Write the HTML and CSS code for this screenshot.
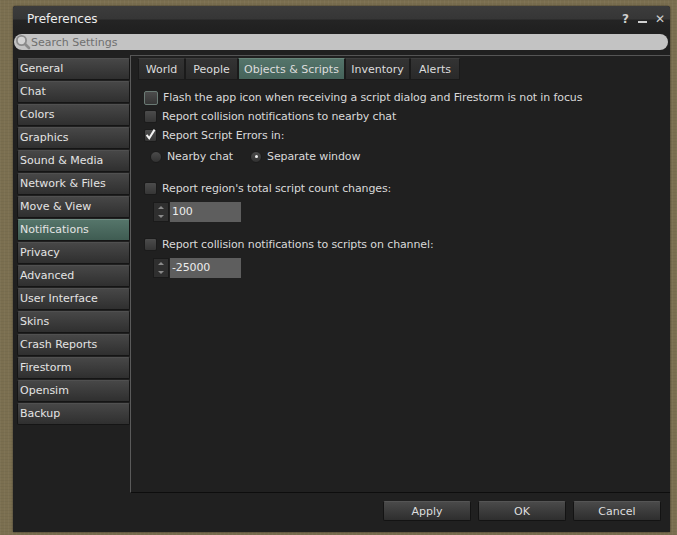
FILE: index.html
```html
<!DOCTYPE html>
<html lang="en">
<head>
<meta charset="utf-8">
<title>Preferences</title>
<link rel="stylesheet" href="styles.css">
</head>
<body>
<div class="window">
  <div class="titlebar">
    <span class="title">Preferences</span>
    <div class="controls">
      <span>?</span>
      <span class="minimize"></span>
      <span>&#x2715;</span>
    </div>
  </div>

  <div class="search">
    <svg class="search-icon" width="16" height="16" viewBox="0 0 16 16">
      <circle cx="6.5" cy="6.5" r="4.6" fill="#d4d4d4" stroke="#8c8c8c" stroke-width="1.8"/>
      <line x1="10" y1="10" x2="14" y2="14" stroke="#8c8c8c" stroke-width="2.6" stroke-linecap="round"/>
    </svg>
    <span class="placeholder">Search Settings</span>
  </div>

  <div class="content">
    <nav class="sidebar">
      <div class="side-btn">General</div>
      <div class="side-btn">Chat</div>
      <div class="side-btn">Colors</div>
      <div class="side-btn">Graphics</div>
      <div class="side-btn">Sound &amp; Media</div>
      <div class="side-btn">Network &amp; Files</div>
      <div class="side-btn">Move &amp; View</div>
      <div class="side-btn active">Notifications</div>
      <div class="side-btn">Privacy</div>
      <div class="side-btn">Advanced</div>
      <div class="side-btn">User Interface</div>
      <div class="side-btn">Skins</div>
      <div class="side-btn">Crash Reports</div>
      <div class="side-btn">Firestorm</div>
      <div class="side-btn">Opensim</div>
      <div class="side-btn">Backup</div>
    </nav>

    <div class="panel">
      <div class="tabs">
        <div class="tab tab-world">World</div>
        <div class="tab tab-people">People</div>
        <div class="tab tab-objects active">Objects &amp; Scripts</div>
        <div class="tab tab-inventory">Inventory</div>
        <div class="tab tab-alerts">Alerts</div>
      </div>

      <div class="options">
        <label class="row">
          <span class="check focused"></span>
          Flash the app icon when receiving a script dialog and Firestorm is not in focus
        </label>
        <label class="row">
          <span class="check"></span>
          Report collision notifications to nearby chat
        </label>
        <label class="row">
          <span class="check checked">
            <svg width="13" height="13" viewBox="0 0 13 13"><path d="M2.6 6.8 L5.2 10.2 L10.6 1.6" fill="none" stroke="#f2f2f2" stroke-width="2"/></svg>
          </span>
          Report Script Errors in:
        </label>
        <div class="row radios">
          <span class="radio-item"><span class="radio"></span>Nearby chat</span>
          <span class="radio-item"><span class="radio selected"></span>Separate window</span>
        </div>

        <label class="row group">
          <span class="check"></span>
          Report region's total script count changes:
        </label>
        <div class="spinner">
          <div class="arrows">
            <span class="arrow up"></span>
            <span class="arrow down"></span>
          </div>
          <div class="value">100</div>
        </div>

        <label class="row group">
          <span class="check"></span>
          Report collision notifications to scripts on channel:
        </label>
        <div class="spinner">
          <div class="arrows">
            <span class="arrow up"></span>
            <span class="arrow down"></span>
          </div>
          <div class="value">-25000</div>
        </div>
      </div>
    </div>
  </div>

  <div class="footer">
    <button class="btn">Apply</button>
    <button class="btn">OK</button>
    <button class="btn">Cancel</button>
  </div>
</div>
</body>
</html>
```

FILE: styles.css
```css
* {
  box-sizing: border-box;
}
body {
  margin: 0;
  width: 677px;
  height: 535px;
  overflow: hidden;
  font-family: "DejaVu Sans", "Liberation Sans", sans-serif;
  font-size: 11px;
  color: #dadada;
  background-color: #7b6f50;
  background-image:
    repeating-linear-gradient(90deg, rgba(255,255,255,0.03) 0 1px, transparent 1px 4px),
    repeating-linear-gradient(0deg, rgba(0,0,0,0.04) 0 1px, transparent 1px 3px);
}
.window {
  margin: 6px 0 0 13px;
  width: 657px;
  height: 526px;
  background: #202020;
  display: flex;
  flex-direction: column;
  border-radius: 3px 3px 0 0;
  box-shadow: 0 0 2px rgba(0,0,0,0.7);
}

/* title bar */
.titlebar {
  height: 26px;
  display: flex;
  align-items: center;
  padding: 0 6px 0 14px;
  border-radius: 3px 3px 0 0;
  background: linear-gradient(#3c3c3c 0%, #363636 50%, #242424 54%, #202020 100%);
}
.title {
  flex: 1;
  font-size: 12px;
  color: #ededed;
}
.controls {
  display: flex;
  align-items: center;
  gap: 8px;
  color: #d0d0d0;
  font-weight: bold;
  font-size: 12px;
}
.controls span {
  width: 9px;
  text-align: center;
}
.controls .minimize {
  height: 2px;
  margin-top: 6px;
  background: #d0d0d0;
}

/* search */
.search {
  margin: 2px 2px 0 1px;
  height: 16px;
  border-radius: 8px;
  background: #c3c3c3;
  display: flex;
  align-items: center;
  position: relative;
}
.search-icon {
  position: absolute;
  left: 1px;
  top: 0;
}
.placeholder {
  padding-left: 17px;
  color: #6f6f6f;
}

/* main area */
.content {
  flex: 1;
  display: flex;
  margin-top: 5px;
}
.sidebar {
  width: 117px;
  padding: 3px 0 0 4px;
  display: flex;
  flex-direction: column;
  gap: 1px;
}
.side-btn {
  height: 22px;
  line-height: 20px;
  padding-left: 2px;
  color: #e4e4e4;
  background: linear-gradient(#474747, #2f2f2f);
  border: 1px solid #151515;
  border-top-color: #505050;
  border-radius: 2px;
}
.side-btn.active {
  background: linear-gradient(#55756a, #3f5c52);
  border-top-color: #6f8c82;
}
.panel {
  flex: 1;
  border-top: 1px solid #555;
  border-left: 1px solid #5a5a5a;
  border-bottom: 1px solid #0d0d0d;
}
.tabs {
  display: flex;
  margin: 2px 0 0 7px;
}
.tab {
  height: 22px;
  line-height: 21px;
  text-align: center;
  color: #dcdcdc;
  background: linear-gradient(#333, #292929);
  border: 1px solid #1a1a1a;
  border-top-color: #3d3d3d;
}
.tab.active {
  background: linear-gradient(#54746a, #45635a);
  border-top-color: #688579;
}
.tab-world { width: 47px; }
.tab-people { width: 53px; }
.tab-objects { width: 107px; }
.tab-inventory { width: 65px; }
.tab-alerts { width: 50px; }

/* options */
.options {
  padding: 8px 0 0 13px;
  letter-spacing: -0.12px;
}
.row {
  height: 19px;
  display: flex;
  align-items: center;
  gap: 5px;
  color: #d9d9d9;
}
.check {
  width: 13px;
  height: 13px;
  flex-shrink: 0;
  border-radius: 2px;
  background: linear-gradient(#4c4c4c, #363636);
  border: 1px solid #1b1b1b;
  position: relative;
}
.check.focused {
  width: 14px;
  height: 14px;
  border-color: #6a7a74;
}
.check svg {
  position: absolute;
  left: -1px;
  top: -2px;
}
.radios {
  margin-top: 2px;
  padding-left: 6px;
  gap: 17px;
}
.radio-item {
  display: flex;
  align-items: center;
  gap: 5px;
}
.radio {
  width: 12px;
  height: 12px;
  border-radius: 50%;
  background: linear-gradient(#4b4b4b, #323232);
  border: 1px solid #1b1b1b;
  display: flex;
  align-items: center;
  justify-content: center;
}
.radio.selected::after {
  content: "";
  width: 3px;
  height: 3px;
  border-radius: 50%;
  background: #f0f0f0;
}
.group {
  margin-top: 13px;
}
.spinner {
  display: flex;
  height: 20px;
  margin: 4px 0 0 9px;
}
.arrows {
  width: 16px;
  display: flex;
  flex-direction: column;
  background: #2f2f2f;
  border: 1px solid #1a1a1a;
}
.arrow {
  flex: 1;
  display: flex;
  align-items: center;
  justify-content: center;
}
.arrow::after {
  content: "";
  border-left: 3px solid transparent;
  border-right: 3px solid transparent;
}
.arrow.up::after {
  border-bottom: 3px solid #8a8a8a;
}
.arrow.down::after {
  border-top: 3px solid #8a8a8a;
}
.value {
  width: 71px;
  margin-left: 1px;
  background: #5e5e5e;
  color: #ececec;
  line-height: 20px;
  padding-left: 2px;
}

/* buttons */
.footer {
  height: 39px;
  display: flex;
  justify-content: flex-end;
  gap: 7px;
  padding: 8px 9px 0 0;
}
.btn {
  width: 88px;
  height: 20px;
  font-family: inherit;
  font-size: 11px;
  color: #dedede;
  background: linear-gradient(#4a4a4a, #2e2e2e);
  border: 1px solid #131313;
  border-top-color: #555;
  border-radius: 2px;
  padding: 0;
}
```
